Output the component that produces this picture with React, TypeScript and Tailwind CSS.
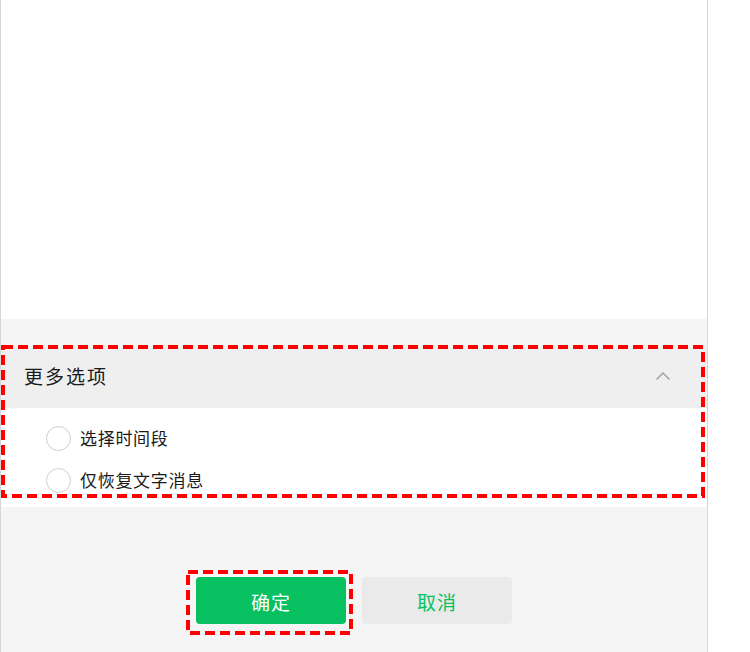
import React from 'react';

const font = { fontFamily: '"Microsoft YaHei", "Noto Sans CJK SC", "Noto Sans", sans-serif' };

// Boîte rouge en pointillés (annotation par-dessus la capture)
function DashedBox({ left, top, width, height }: { left: number; top: number; width: number; height: number }) {
  return (
    <svg
      className="absolute pointer-events-none"
      style={{ left: left - 2, top: top - 2 }}
      width={width + 4}
      height={height + 4}
    >
      <rect
        x={2}
        y={2}
        width={width}
        height={height}
        fill="none"
        stroke="#ff0000"
        strokeWidth={4}
        strokeDasharray="10 5"
      />
    </svg>
  );
}

function Radio({ label }: { label: string }) {
  return (
    <div className="flex items-center h-[26px]">
      <span className="w-[25px] h-[25px] rounded-full border-[1.5px] border-[#cfcfcf] bg-white shrink-0" />
      <span className="ml-[9px] text-[17px] tracking-[0.7px] text-[#1a1a1a]">{label}</span>
    </div>
  );
}

export default function App() {
  return (
    <div className="relative w-[750px] h-[652px] bg-white overflow-hidden flex" style={font}>
      {/* ── Panneau principal ── */}
      <div className="w-[708px] h-full border-l border-r border-[#d6d6d6] flex flex-col">
        <div className="h-[319px] bg-white" />

        <div className="flex-1 bg-[#f5f5f5] pt-[28px] flex flex-col">
          {/* En-tête "更多选项" */}
          <div className="h-[61px] bg-[#efefef] flex items-center justify-between pl-[23px] pr-[36px] pb-[3px]">
            <span className="text-[19px] tracking-[2px] text-[#1a1a1a]">更多选项</span>
            <svg width="16" height="10" viewBox="0 0 16 10">
              <path d="M1.5 8.5 L8 2 L14.5 8.5" fill="none" stroke="#a3a3a3" strokeWidth="1.5" />
            </svg>
          </div>

          {/* Options */}
          <div className="bg-white pt-[17px] pb-[14px] pl-[45px] flex flex-col gap-[16px]">
            <Radio label="选择时间段" />
            <Radio label="仅恢复文字消息" />
          </div>

          {/* Boutons */}
          <div className="flex justify-center gap-[16px] mt-[70px]">
            <button className="w-[150px] h-[47px] rounded-[4px] bg-[#07c160] text-white text-[19px] tracking-[1px] pt-[3px]">
              确定
            </button>
            <button className="w-[150px] h-[47px] rounded-[4px] bg-[#eaeaea] text-[#07c160] text-[19px] tracking-[1px] pt-[3px]">
              取消
            </button>
          </div>
        </div>
      </div>

      {/* ── Annotations ── */}
      <DashedBox left={3} top={347} width={700} height={149} />
      <DashedBox left={188} top={572} width={163} height={61} />
    </div>
  );
}
